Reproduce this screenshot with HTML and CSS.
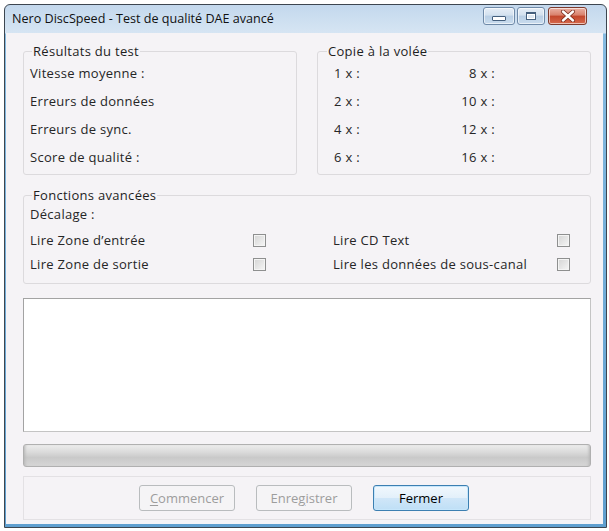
FILE: index.html
```html
<!DOCTYPE html>
<html lang="fr">
<head>
<meta charset="utf-8">
<title>Nero DiscSpeed</title>
<link rel="stylesheet" href="styles.css">
</head>
<body>
<div class="window">
  <div class="titlebar">
    <span class="title">Nero DiscSpeed - Test de qualité DAE avancé</span>
    <div class="caption">
      <span class="cbtn min"><span class="glyph-min"></span></span>
      <span class="cbtn max"><span class="glyph-max"></span></span>
      <span class="cbtn close">
        <svg width="16" height="12" viewBox="0 0 16 12"><path d="M3 1.5 L13 10.5 M13 1.5 L3 10.5" stroke="#7a2a1c" stroke-width="4" stroke-linecap="round"/><path d="M3 1.5 L13 10.5 M13 1.5 L3 10.5" stroke="#ffffff" stroke-width="2.4" stroke-linecap="round"/></svg>
      </span>
    </div>
  </div>
  <div class="client">
    <div class="top-groups">
      <fieldset class="group">
        <legend class="legend">Résultats du test</legend>
        <div class="row">Vitesse moyenne :</div>
        <div class="row">Erreurs de données</div>
        <div class="row">Erreurs de sync.</div>
        <div class="row">Score de qualité :</div>
      </fieldset>
      <fieldset class="group copy">
        <legend class="legend copy-legend">Copie à la volée</legend>
        <div class="speed-grid">
          <span class="row">1 x :</span><span class="row r">8 x :</span>
          <span class="row">2 x :</span><span class="row r">10 x :</span>
          <span class="row">4 x :</span><span class="row r">12 x :</span>
          <span class="row">6 x :</span><span class="row r">16 x :</span>
        </div>
      </fieldset>
    </div>
    <fieldset class="group adv">
      <legend class="legend">Fonctions avancées</legend>
      <div class="decal">Décalage :</div>
      <div class="adv-grid">
        <span class="opt">Lire Zone d’entrée</span><span class="check"></span>
        <span class="opt second">Lire CD Text</span><span class="check"></span>
        <span class="opt">Lire Zone de sortie</span><span class="check"></span>
        <span class="opt second">Lire les données de sous-canal</span><span class="check"></span>
      </div>
    </fieldset>
    <div class="log"></div>
    <div class="progress"></div>
    <div class="buttons">
      <span class="btn disabled"><u>C</u>ommencer</span>
      <span class="btn disabled">Enre<u>g</u>istrer</span>
      <span class="btn default">Fermer</span>
    </div>
  </div>
</div>
</body>
</html>
```
FILE: styles.css
```css
html, body {
  margin: 0;
  padding: 0;
  background: #ffffff;
}
body {
  width: 609px;
  height: 531px;
  overflow: hidden;
  font-family: "Open Sans", "Noto Sans", sans-serif;
  font-size: 13px;
  letter-spacing: 0.3px;
  color: #262626;
}
.window {
  margin: 4px 2px 0 4px;
  width: 601px;
  height: 522px;
  border: 1px solid #3d4650;
  border-radius: 6px 6px 0 0;
  background: linear-gradient(#c3d8ed 0, #d6e5f3 28px, #86bbe1 29px, #5f9fcf 100%);
  display: flex;
  flex-direction: column;
}
.titlebar {
  height: 28px;
  display: flex;
  align-items: center;
  justify-content: space-between;
  padding: 0 19px 0 7px;
  border-radius: 5px 5px 0 0;
}
.title {
  font-size: 12.6px;
  letter-spacing: 0;
  color: #111;
  margin-top: -1px;
}
.caption {
  display: flex;
  gap: 2px;
  align-self: flex-start;
  margin-top: 2px;
}
.cbtn {
  height: 16px;
  border: 1px solid #6f8aa8;
  border-radius: 3px;
  background: linear-gradient(#e6eef7 0, #d3e1ef 45%, #b9cfe5 50%, #c9dcee 100%);
  display: flex;
  align-items: center;
  justify-content: center;
  box-shadow: inset 0 0 0 1px rgba(255,255,255,0.6);
}
.min { width: 30px; }
.max { width: 26px; }
.close {
  width: 37px;
  margin-left: 1px;
  border-color: #7d3a2c;
  background: linear-gradient(#eab1a4 0, #d9806b 45%, #c2452b 50%, #d66a4c 100%);
}
.glyph-min {
  width: 12px;
  height: 3px;
  margin-top: 5px;
  border: 1px solid #45607e;
  background: #fff;
  border-radius: 1px;
}
.glyph-max {
  width: 8px;
  height: 5px;
  border: 1px solid #45607e;
  border-top-width: 2px;
  background: #dfe9f3;
  box-shadow: inset 0 0 0 1px #fff;
}
.client {
  flex: 1;
  margin: 0 3px 3px 1px;
  background: #f5f3f6;
  padding: 10px 12px 0 17px;
  display: flex;
  flex-direction: column;
}
.group {
  margin: 0;
  padding: 0 0 3px 6px;
  border: 1px solid #dcdadd;
  border-radius: 3px;
  min-width: 0;
}
.legend {
  line-height: 16px;
  padding: 0 1px;
  margin-left: 2px;
  color: #1e1e1e;
}
.top-groups {
  display: grid;
  grid-template-columns: 1fr 1fr;
  gap: 20px;
}
.row {
  line-height: 28px;
  height: 28px;
  white-space: nowrap;
}
.copy {
  padding-left: 16px;
}
.copy-legend {
  margin-left: -7px;
}
.speed-grid {
  display: grid;
  grid-template-columns: 124px 37px;
}
.speed-grid .r {
  text-align: right;
}
.adv {
  margin-top: 12px;
  padding-bottom: 7px;
}
.decal {
  line-height: 22px;
}
.adv-grid {
  margin-top: 3px;
  display: grid;
  grid-template-columns: 223px 13px 291px 13px;
  align-items: center;
}
.opt {
  line-height: 24px;
  white-space: nowrap;
}
.opt.second {
  margin-left: 67px;
}
.check {
  width: 11px;
  height: 11px;
  border: 1px solid #8e8f8f;
  background: linear-gradient(135deg, #d4d4d4, #f6f6f6);
  box-shadow: inset 0 0 0 1px #f4f4f4;
}
.log {
  margin-top: 14px;
  height: 132px;
  background: #ffffff;
  border: 1px solid #a3a3a3;
  border-right-color: #c4c4c4;
  border-bottom-color: #c4c4c4;
}
.progress {
  margin-top: 12px;
  height: 21px;
  border: 1px solid #b0b0b0;
  border-radius: 3px;
  background: linear-gradient(#ececec 0, #dadada 35%, #c9c9c9 60%, #d6d6d6 100%);
  box-shadow: inset 3px 0 3px -2px #b5b5b5, inset -3px 0 3px -2px #b5b5b5;
}
.buttons {
  margin-top: 9px;
  height: 42px;
  border: 1px solid #e3e1e4;
  display: flex;
  justify-content: center;
  align-items: center;
  gap: 21px;
  padding-right: 6px;
}
.btn {
  box-sizing: border-box;
  width: 96px;
  height: 26px;
  border-radius: 3px;
  display: flex;
  align-items: center;
  justify-content: center;
  letter-spacing: 0;
}
.btn.disabled {
  color: #9d9d9d;
  border: 1px solid #b9bcbe;
  background: #f5f4f6;
}
.btn.default {
  color: #000;
  border: 1px solid #3c7fb1;
  background: linear-gradient(#f1f8fd 0, #e3f0fa 48%, #cfe6f8 52%, #bfdff6 100%);
  box-shadow: inset 0 0 0 1px #c6e6fb;
}
u {
  text-decoration: underline;
  text-underline-offset: 2px;
}
```
